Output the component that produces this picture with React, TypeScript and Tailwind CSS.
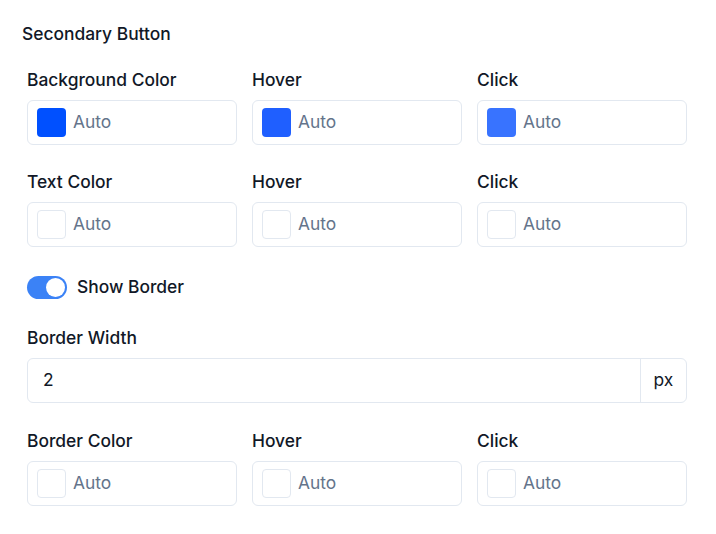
import React from "react";

const font = { fontFamily: "Inter, 'Noto Sans', sans-serif" };

function ColorInput({ color }: { color?: string }) {
  return (
    <div className="flex h-[45px] items-center rounded-md border border-[#e2e8f0] bg-white pl-[9px]">
      {color ? (
        <div className="h-[29px] w-[29px] rounded-[4px]" style={{ backgroundColor: color }} />
      ) : (
        <div className="h-[29px] w-[29px] rounded-[4px] border border-[#e2e8f0] bg-white" />
      )}
      <span className="ml-[7px] text-[17.4px] text-[#64748b]">Auto</span>
    </div>
  );
}

function ColorRow({ labels, colors }: { labels: string[]; colors: (string | undefined)[] }) {
  return (
    <div className="grid grid-cols-3 gap-x-[15px]">
      {labels.map((l, i) => (
        <div key={i} className="flex flex-col gap-[8px]">
          <div className="text-[17.4px] font-medium leading-[24px] text-[#111827]">{l}</div>
          <ColorInput color={colors[i]} />
        </div>
      ))}
    </div>
  );
}

export default function App() {
  return (
    <div className="h-[534px] w-[716px] bg-white pl-[22px] pr-[29px] pt-[22px]" style={font}>
      <div className="text-[17.4px] font-medium leading-[24px] text-[#111827]">Secondary Button</div>
      <div className="mt-[22px] flex flex-col pl-[5px]">
        <ColorRow labels={["Background Color", "Hover", "Click"]} colors={["#0050ff", "#1f5fff", "#3873ff"]} />
        <div className="mt-[25px]">
          <ColorRow labels={["Text Color", "Hover", "Click"]} colors={[undefined, undefined, undefined]} />
        </div>
        <div className="mt-[28px] flex items-center gap-[10px]">
          <div className="relative h-[23px] w-[40px] rounded-full bg-[#3b82f6]">
            <div className="absolute right-[2px] top-[2px] h-[19px] w-[19px] rounded-full bg-white" />
          </div>
          <span className="text-[17.4px] font-medium leading-[24px] text-[#111827]">Show Border</span>
        </div>
        <div className="mt-[27px] flex flex-col gap-[8px]">
          <div className="text-[17.4px] font-medium leading-[24px] text-[#111827]">Border Width</div>
          <div className="flex h-[45px] items-stretch rounded-md border border-[#e2e8f0] bg-white">
            <div className="flex flex-1 items-center pl-[15px] text-[17.4px] text-[#111827]">2</div>
            <div className="flex w-[46px] items-center justify-center border-l border-[#e2e8f0] text-[17.4px] text-[#111827]">px</div>
          </div>
        </div>
        <div className="mt-[26px]">
          <ColorRow labels={["Border Color", "Hover", "Click"]} colors={[undefined, undefined, undefined]} />
        </div>
      </div>
    </div>
  );
}
